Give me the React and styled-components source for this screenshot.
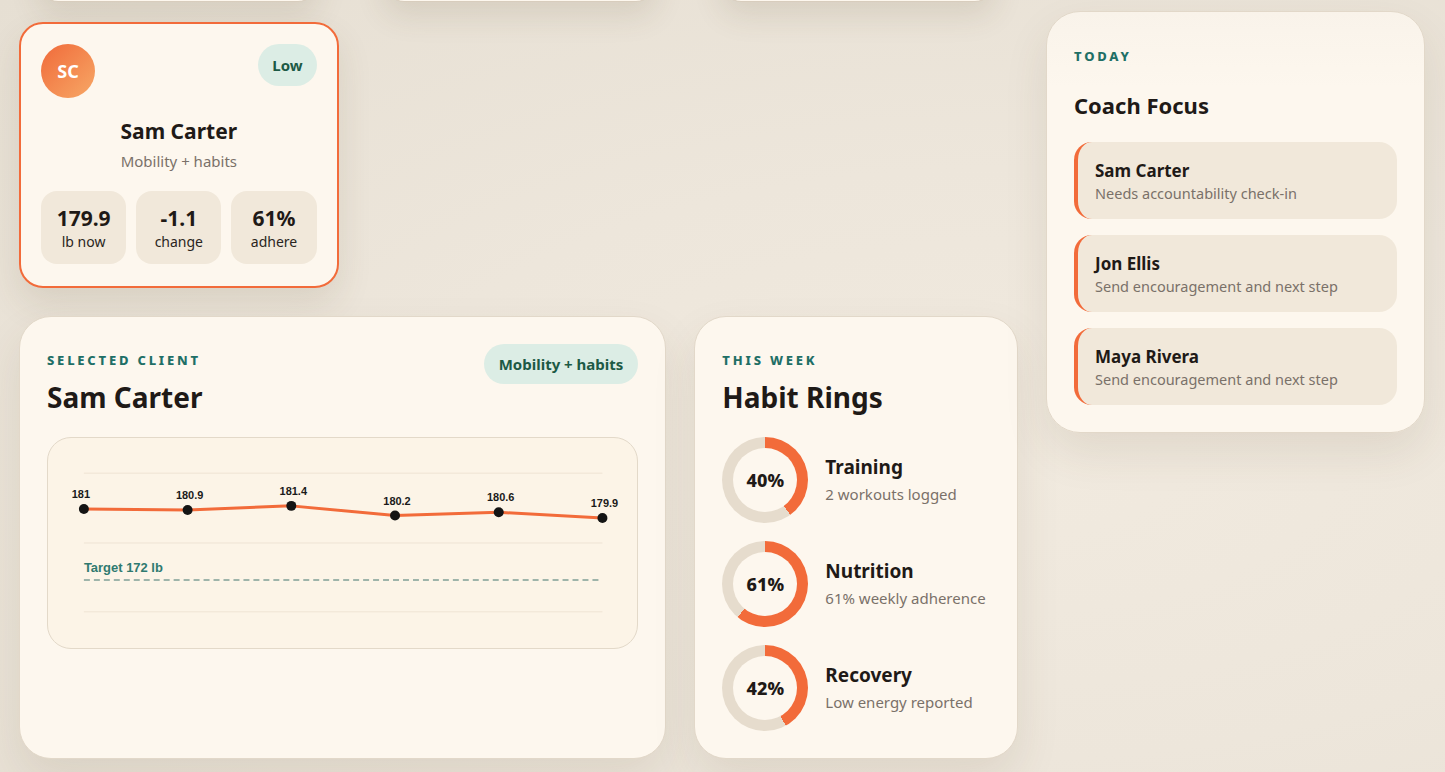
import React from 'react'
import styled, { createGlobalStyle } from 'styled-components'

// palette
const Colors = {
  page: '#ece5da',
  card: '#fdf7ee',
  cardLine: '#e2d8c9',
  tile: '#f1e8da',
  ink: '#1f1a17',
  muted: '#7a7169',
  teal: '#1f6f66',
  tealSoft: '#dcede5',
  tealInk: '#1d5a45',
  orange: '#f26b3a',
  track: '#e6dccd'
}

const FONT = '"Segoe UI", "Noto Sans", "Open Sans", sans-serif'

// data
const weights = [181, 180.9, 181.4, 180.2, 180.6, 179.9]

const clientStats = [
  { id: 'w', value: '179.9', label: 'lb now' },
  { id: 'c', value: '-1.1', label: 'change' },
  { id: 'a', value: '61%', label: 'adhere' }
]

const habits = [
  { id: 'training', pct: 40, name: 'Training', note: '2 workouts logged' },
  { id: 'nutrition', pct: 61, name: 'Nutrition', note: '61% weekly adherence' },
  { id: 'recovery', pct: 42, name: 'Recovery', note: 'Low energy reported' }
]

const focusItems = [
  { id: 1, name: 'Sam Carter', note: 'Needs accountability check-in' },
  { id: 2, name: 'Jon Ellis', note: 'Send encouragement and next step' },
  { id: 3, name: 'Maya Rivera', note: 'Send encouragement and next step' }
]

const GlobalStyle = createGlobalStyle`
  html, body {
    margin: 0;
    height: 100%;
  }
  body {
    font-family: ${FONT};
    color: ${Colors.ink};
    background:
      radial-gradient(ellipse at 70% 60%, #f1eadf 0%, #ede6db 45%, #e6dfd3 100%);
    overflow: hidden;
  }
`

// layout
const Page = styled.div`
  display: grid;
  grid-template-columns: 1fr 379px;
  gap: 28px;
  align-items: start;
  padding: 0 20px 0 19px;
  height: 772px;
  overflow: hidden;
`

const MainColumn = styled.div`
  display: flex;
  flex-direction: column;
  margin-top: -80px;
`

const StripRow = styled.div`
  display: grid;
  grid-template-columns: 280px 272px 274px;
  justify-content: space-between;
  padding: 0 23px 0 19px;
`

const StripCard = styled.div`
  height: 80px;
  background: ${Colors.card};
  border: 1px solid #d8cdbd;
  border-radius: 20px;
  box-shadow: 0 14px 30px rgba(90, 70, 40, 0.12);
`

const ClientGrid = styled.div`
  display: grid;
  grid-template-columns: repeat(3, 1fr);
  gap: 20px;
  margin-top: 20px;
`

const DetailGrid = styled.div`
  display: grid;
  grid-template-columns: 2fr 1fr;
  gap: 28px;
  margin-top: 28px;
`

const Panel = styled.section`
  background: ${Colors.card};
  border: 1px solid ${Colors.cardLine};
  border-radius: 32px;
  padding: 27px 27px 27px;
  box-shadow: 0 20px 44px rgba(90, 70, 40, 0.1);
`

const SidePanel = styled(Panel)`
  margin-top: 11px;
  border-radius: 34px;
  padding: 28px 27px 27px;
  background: linear-gradient(180deg, #f9f3ea 0%, ${Colors.card} 18%);
`

const Eyebrow = styled.div`
  margin-top: 6px;
  font-size: 13px;
  line-height: 20px;
  font-weight: 800;
  letter-spacing: 2.8px;
  text-transform: uppercase;
  color: ${Colors.teal};
`

const PanelTitle = styled.h2`
  margin: ${props => props.$small ? '24px 0 0' : '10px 0 0'};
  font-size: ${props => props.$small ? '22px' : '28px'};
  line-height: ${props => props.$small ? '30px' : '34px'};
  font-weight: 700;
  color: ${Colors.ink};
`

const Pill = styled.span`
  display: inline-flex;
  align-items: center;
  height: ${props => props.$tall ? '42px' : '40px'};
  padding: 0 ${props => props.$tall ? '14px' : '15px'};
  border-radius: 999px;
  background: ${Colors.tealSoft};
  color: ${Colors.tealInk};
  font-size: 15px;
  font-weight: 700;
  white-space: nowrap;
`

// client card
const ClientCard = styled.article`
  border: 2px solid ${Colors.orange};
  border-radius: 24px;
  background: ${Colors.card};
  padding: 20px 20px 22px;
  box-shadow: 0 16px 34px rgba(90, 70, 40, 0.12);
`

const CardTop = styled.div`
  display: flex;
  justify-content: space-between;
  align-items: flex-start;
`

const Avatar = styled.div`
  width: 54px;
  height: 54px;
  border-radius: 50%;
  display: grid;
  place-items: center;
  background: linear-gradient(135deg, #f06a3a 0%, #f7a866 100%);
  color: #fff;
  font-size: 18px;
  font-weight: 700;
`

const ClientName = styled.div`
  margin-top: 19px;
  text-align: center;
  font-size: 21px;
  line-height: 28px;
  font-weight: 700;
`

const ClientPlan = styled.div`
  margin-top: 6px;
  text-align: center;
  font-size: 15px;
  line-height: 20px;
  color: ${Colors.muted};
`

const StatRow = styled.div`
  display: grid;
  grid-template-columns: repeat(3, 1fr);
  gap: 10px;
  margin-top: 20px;
`

const StatTile = styled.div`
  background: ${Colors.tile};
  border-radius: 16px;
  padding: 13px 4px 12px;
  text-align: center;
`

const StatValue = styled.div`
  font-size: 21px;
  line-height: 28px;
  font-weight: 700;
`

const StatLabel = styled.div`
  font-size: 14px;
  line-height: 20px;
  color: #2a2521;
`

// selected client
const PanelHead = styled.div`
  display: flex;
  justify-content: space-between;
  align-items: flex-start;
`

const ChartBox = styled.div`
  margin-top: 23px;
  height: 210px;
  border: 1px solid #e3d9c9;
  border-radius: 24px;
  background: #fcf4e7;
  overflow: hidden;
`

const ChartLabel = styled.text`
  font-family: "Liberation Sans", Arial, sans-serif;
  font-size: 11px;
  font-weight: 700;
  fill: #1a1a1a;
`

const TargetLabel = styled.text`
  font-family: "Liberation Sans", Arial, sans-serif;
  font-size: 13px;
  font-weight: 700;
  fill: #2f7a70;
`

// habit rings
const RingList = styled.div`
  display: flex;
  flex-direction: column;
  gap: 18px;
  margin-top: 23px;
`

const RingRow = styled.div`
  display: flex;
  align-items: center;
  gap: 17px;
`

const Ring = styled.div`
  position: relative;
  flex: none;
  width: 86px;
  height: 86px;
  border-radius: 50%;
  background: conic-gradient(
    ${Colors.orange} 0 ${props => props.$pct}%,
    ${Colors.track} ${props => props.$pct}% 100%
  );
  display: grid;
  place-items: center;

  &::before {
    content: '';
    position: absolute;
    inset: 11px;
    border-radius: 50%;
    background: ${Colors.card};
  }
`

const RingValue = styled.span`
  position: relative;
  font-size: 18px;
  font-weight: 800;
`

const HabitName = styled.div`
  font-size: 19px;
  line-height: 24px;
  font-weight: 700;
`

const HabitNote = styled.div`
  margin-top: 4px;
  font-size: 15px;
  line-height: 22px;
  color: ${Colors.muted};
`

// coach focus
const FocusList = styled.div`
  display: flex;
  flex-direction: column;
  gap: 16px;
  margin-top: 22px;
`

const FocusItem = styled.div`
  background: ${Colors.tile};
  border-left: 4px solid ${Colors.orange};
  border-radius: 18px;
  padding: 17px 18px 16px 17px;
`

const FocusName = styled.div`
  font-size: 17px;
  line-height: 24px;
  font-weight: 700;
`

const FocusNote = styled.div`
  font-size: 14.5px;
  line-height: 20px;
  color: ${Colors.muted};
`

const WeightChart = ({ values, target }) => {
  const xs = values.map((_, i) => 36 + i * 104)
  const toY = v => 71 + (181 - v) * 8.1
  const points = values.map((v, i) => `${xs[i]},${toY(v)}`).join(' ')
  const targetY = 142

  return (
    <svg width='100%' height='210' viewBox='0 0 591 210'>
      {[35, 105, 174].map(y => (
        <line key={y} x1='36' x2='556' y1={y} y2={y} stroke='#efe4d4' strokeWidth='1' />
      ))}
      <line x1='36' x2='556' y1={targetY} y2={targetY} stroke='#7f9f97' strokeWidth='1.5' strokeDasharray='6 4' />
      <TargetLabel x='36' y={targetY - 8}>Target {target} lb</TargetLabel>
      <polyline points={points} fill='none' stroke={Colors.orange} strokeWidth='3' strokeLinejoin='round' />
      {values.map((v, i) => (
        <g key={i}>
          <circle cx={xs[i]} cy={toY(v)} r='5' fill='#141414' />
          <ChartLabel x={xs[i] + (i === 0 ? -3 : 2)} y={toY(v) - 11} textAnchor='middle'>{v}</ChartLabel>
        </g>
      ))}
    </svg>
  )
}

const App = () => (
  <React.Fragment>
    <GlobalStyle />
    <Page>
      <MainColumn>
        <StripRow>
          <StripCard />
          <StripCard />
          <StripCard />
        </StripRow>

        <ClientGrid>
          <ClientCard>
            <CardTop>
              <Avatar>SC</Avatar>
              <Pill $tall>Low</Pill>
            </CardTop>
            <ClientName>Sam Carter</ClientName>
            <ClientPlan>Mobility + habits</ClientPlan>
            <StatRow>
              {clientStats.map(stat => (
                <StatTile key={stat.id}>
                  <StatValue>{stat.value}</StatValue>
                  <StatLabel>{stat.label}</StatLabel>
                </StatTile>
              ))}
            </StatRow>
          </ClientCard>
        </ClientGrid>

        <DetailGrid>
          <Panel>
            <PanelHead>
              <div>
                <Eyebrow>Selected client</Eyebrow>
                <PanelTitle>Sam Carter</PanelTitle>
              </div>
              <Pill>Mobility + habits</Pill>
            </PanelHead>
            <ChartBox>
              <WeightChart values={weights} target={172} />
            </ChartBox>
          </Panel>

          <Panel>
            <Eyebrow>This week</Eyebrow>
            <PanelTitle>Habit Rings</PanelTitle>
            <RingList>
              {habits.map(habit => (
                <RingRow key={habit.id}>
                  <Ring $pct={habit.pct}>
                    <RingValue>{habit.pct}%</RingValue>
                  </Ring>
                  <div>
                    <HabitName>{habit.name}</HabitName>
                    <HabitNote>{habit.note}</HabitNote>
                  </div>
                </RingRow>
              ))}
            </RingList>
          </Panel>
        </DetailGrid>
      </MainColumn>

      <SidePanel>
        <Eyebrow>Today</Eyebrow>
        <PanelTitle $small>Coach Focus</PanelTitle>
        <FocusList>
          {focusItems.map(item => (
            <FocusItem key={item.id}>
              <FocusName>{item.name}</FocusName>
              <FocusNote>{item.note}</FocusNote>
            </FocusItem>
          ))}
        </FocusList>
      </SidePanel>
    </Page>
  </React.Fragment>
)

export default App
